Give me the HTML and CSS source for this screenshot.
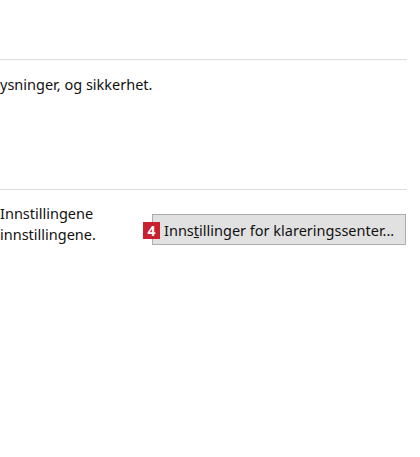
FILE: index.html
```html
<!DOCTYPE html>
<html lang="no">
<head>
<meta charset="utf-8">
<link rel="stylesheet" href="styles.css">
</head>
<body>
<div class="page">
  <div class="rule"></div>
  <p class="desc first">ysninger, og sikkerhet.</p>
  <div class="rule"></div>
  <div class="row">
    <p class="desc col">Innstillingene<br>innstillingene.</p>
    <button class="btn" type="button"><span class="badge">4</span>Inns<u>t</u>illinger for klareringssenter...</button>
  </div>
</div>
</body>
</html>
```
FILE: styles.css
```css
html, body {
  margin: 0;
  padding: 0;
  background: #ffffff;
}
body {
  font-family: "Noto Sans", "Segoe UI", sans-serif;
  font-size: 14.5px;
  color: #111111;
  width: 420px;
  height: 457px;
  overflow: hidden;
}
.page {
  padding-top: 59px;
}
.rule {
  width: 407px;
  height: 1px;
  background: #dcdcdc;
}
.desc {
  margin: 0;
  line-height: 21px;
  white-space: nowrap;
}
.first {
  margin-top: 14px;
  margin-bottom: 94px;
}
.row {
  display: flex;
  align-items: flex-start;
  margin-top: 13px;
}
.col {
  width: 152px;
  flex: none;
}
.btn {
  position: relative;
  margin-top: 11px;
  width: 254px;
  height: 31px;
  padding: 0 0 0 11px;
  text-align: left;
  background: #e1e1e1;
  border: 1px solid #adadad;
  border-radius: 0;
  font-family: inherit;
  font-size: 14.5px;
  color: #111111;
  white-space: nowrap;
}
.badge {
  position: absolute;
  left: -10px;
  top: 7px;
  width: 17px;
  height: 17px;
  background: #c8202f;
  color: #ffffff;
  font-weight: bold;
  font-size: 14px;
  line-height: 17px;
  text-align: center;
}
```
